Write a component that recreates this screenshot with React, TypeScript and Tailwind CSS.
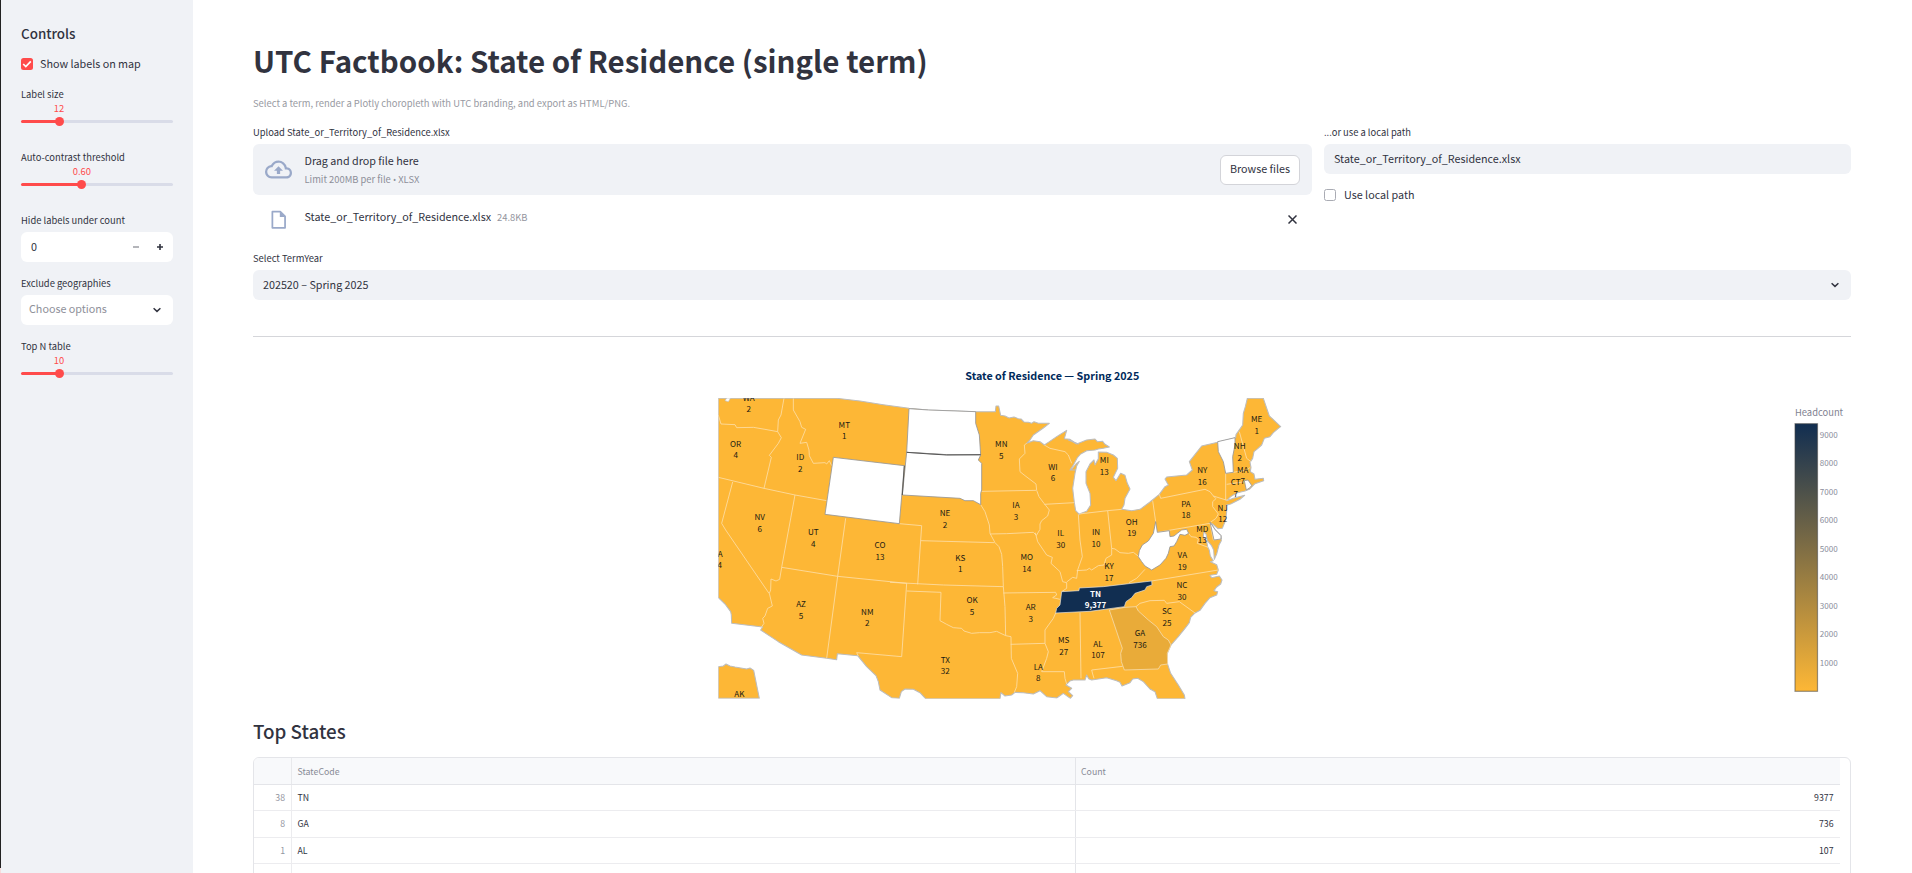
import React from "react";

type Pt = [number, number];

/* Map geometry is stored in a x3 grid, one frame per tile offset. */
const NAVY = "#112e51";
const GOLD = "#fdb736";

const shift = (dx: number, dy: number, pts: string) =>
  pts
    .trim()
    .split(/\s+/)
    .map((p) => {
      const [x, y] = p.split(",").map(Number);
      return `${x + dx},${y + dy}`;
    })
    .join(" ");

const A = (p: string) => shift(0, 0, p);
const B = (p: string) => shift(540, 0, p);
const C = (p: string) => shift(1080, 90, p);
const D = (p: string) => shift(0, 510, p);
const E = (p: string) => shift(540, 510, p);
const F = (p: string) => shift(1080, 510, p);

const outline = [
  A("25,115 380,115 450,123 520,134 597,145"),
  B("115,150 257,155 316,155 318,138 326,138 332,166 345,168 357,174 372,171 385,176 393,177 402,186 415,187 425,190 432,185 445,190 478,190 460,204 430,225 420,240 410,250 430,242 450,245 463,255 475,247 500,230 530,211 523,236 540,238 552,246 565,252"),
  C("-5,150 0,148 8,155 20,162 50,150 75,147 82,155 98,154 104,162 118,171 100,175 85,177 75,180 50,182 32,192 22,203 10,225 0,240"),
  B("555,330 543,330 558,312 568,304 560,318 555,340 548,385 553,428 557,452 568,463"),
  C("28,372 50,364 62,345 60,310 48,280 48,245 60,222 72,210 75,225 85,206 85,186 110,187 130,195 142,205 143,235 130,262 138,272 152,250 165,256 172,280 180,297 165,325 162,345 155,358 185,362 210,358 240,336 268,313 285,290 295,285 285,267 290,261 350,255 367,240 358,215 395,168 443,157 497,143 498,134 518,105 520,70 526,50 532,25 580,25 598,78 606,85 632,110 624,116 610,128 600,140 583,145 575,165 563,176 552,185 548,205 540,217 543,232 541,245 552,252 555,268 580,265 581,272 555,281 538,298 525,303 500,309 482,320 470,332 490,325 524,316 510,328 482,342 468,346 470,365 467,390 457,415 444,416 425,400 428,408 436,420 453,437 454,452 447,465 440,492 433,508 431,480 424,466 412,452 408,432 402,425 400,440 410,455 413,470 418,481 421,498 430,512 421,515 440,524 445,540"),
  F("440,133 420,136 425,143 448,138 456,150 452,162 440,171 432,182 443,185 440,195 420,203 405,220 390,241 375,249 362,262 358,278 345,295 325,320 303,345 292,370 292,400 302,430 325,465 343,495 345,506 262,506 255,485 240,477 220,455 203,445 188,447 180,458 156,468 150,457 140,452 110,443 65,450 56,446 50,435 45,450 10,450"),
  E("540,453 528,465 545,475 535,485 548,497 541,505 520,490 500,504 470,500 450,482 430,492 400,488 375,487 365,495 345,498 333,488 330,506 107,506 90,488 70,478 45,477 34,485"),
  D("568,505 545,503 510,480 505,455 498,437 470,410 443,377 382,371 380,389 350,385 275,375 205,335 152,300 158,291 65,280 64,255 62,245 45,222 25,203"),
].join(" ");

const alaska = D("25,410 40,408 48,402 60,408 75,411 110,417 120,414 131,421 148,505 25,505");

const noData = [
  A("370,292 583,317 568,491 345,463"),
  B("57,146 115,150 257,155 257,190 268,225 272,285 170,284 50,277"),
  B("50,277 170,284 272,285 265,300 275,310 275,390 272,400 272,434 250,422 225,422 210,415 37,405"),
  C("443,155 495,143 495,165 488,200 490,247 467,250 460,215 445,185"),
  C("257,395 262,427 298,422 300,440 312,438 322,430 335,420 350,418 356,430 345,436 330,433 320,455 312,468 300,470 295,490 288,505 270,525 245,540 225,528 215,515 205,500 208,482 217,465 235,453 250,430"),
  C("420,396 428,408 436,420 453,437 453,447 432,450"),
  C("523,272 534,270 545,286 540,293 529,300"),
];

const tennessee = E("515,185 567,182 568,174 640,170 785,153 786,165 770,170 765,180 735,190 725,203 708,215 703,230 600,244 497,249 500,235 510,225");
const georgia = F("118,240 165,232 198,230 205,243 235,270 260,290 280,320 295,330 303,345 292,370 293,402 272,405 265,417 163,420 154,395 152,370 157,355");

const borders = [
  A("222,115 213,165 205,180 203,215"),
  A("25,165 33,192 75,194 80,203 130,202 165,208 203,215"),
  A("203,215 214,233 205,250 178,286 184,292 162,385"),
  A("250,115 250,150 270,185 275,202 287,208 270,250 290,247 297,270 298,287 310,310 345,308 350,312 358,302 365,317"),
  A("25,352 162,385 255,405 350,422"),
  A("68,366 35,490 47,510 177,700"),
  A("255,405 215,622"),
  D("215,112 209,148 198,153 183,147 182,180 178,190 187,228 173,235 165,258 158,265 162,280 153,293"),
  D("215,112 383,139 590,160"),
  A("407,475 383,649 350,895"),
  A("568,491 635,497 623,673"),
  D("590,160 575,380 440,368 445,378"),
  E("0,157 160,165 340,170"),
  E("50,183 153,187 150,272 170,283 190,293 215,295 222,303 245,310 268,308 300,308 320,304 347,317 363,320 364,385 383,430 380,470 373,487"),
  E("92,32 313,38"),
  B("272,434 285,455 298,495 300,520 315,548 327,560 335,583 338,620 340,680 345,740 347,827"),
  B("275,394 438,391"),
  B("300,522 350,521 430,517 440,527"),
  B("410,250 403,255 405,280 388,297 390,335 405,347 438,372 440,391 447,410 462,430 478,450 473,468 455,482 450,492 450,508 440,525"),
  B("463,433 553,428"),
  B("463,255 480,265 525,275 535,285 545,310"),
  E("436,8 443,35 470,75 487,82 483,100 510,125 518,155 530,158 530,175 515,185"),
  B("565,463 570,540 577,590 563,630 560,655 548,652 530,666"),
  F("20,122 50,120 58,115 65,120 85,107 102,105 108,85 125,75 125,55 135,57 150,68 175,70 190,67 207,80"),
  C("28,372 113,362 155,358"),
  C("113,362 125,475"),
  C("248,332 257,395"),
  C("268,313 272,325 405,298 420,305 430,318 468,330"),
  C("430,318 438,326 428,335 428,350 445,372 438,385 420,398"),
  C("262,427 420,400"),
  C("420,400 430,450 453,447"),
  C("356,430 363,440 378,442 385,448 382,460 415,472"),
  C("467,250 467,330 475,330"),
  C("467,250 490,247 530,240 541,232"),
  C("508,125 530,205 543,215"),
  C("470,283 525,275"),
  E("340,189 497,187 500,195 488,203 510,208"),
  E("362,343 465,340"),
  E("497,249 490,265 465,300 465,340 475,365 470,385 455,425 523,425 525,445 530,462"),
  F("30,248 33,445"),
  F("158,409 65,420 68,432 72,445"),
  F("198,230 210,220 240,212 283,211 290,220 328,215 375,249"),
  F("245,153 445,120"),
  F("177,158 200,145 225,118"),
];

/* code, count, x, code baseline, count baseline */
const labels: [string, string, number, number, number][] = [
  ["WA", "2", 116, 122, 156],
  ["OR", "4", 77, 262, 294],
  ["MT", "1", 403, 205, 237],
  ["ID", "2", 271, 301, 337],
  ["NV", "6", 149, 481, 516],
  ["UT", "4", 310, 525, 561],
  ["CO", "13", 510, 564, 600],
  ["AZ", "5", 273, 741, 777],
  ["NM", "2", 472, 765, 798],
  ["MN", "5", 874, 261, 297],
  ["WI", "6", 1029, 330, 363],
  ["IA", "3", 918, 444, 480],
  ["NE", "2", 705, 468, 504],
  ["KS", "1", 751, 603, 636],
  ["MO", "14", 950, 600, 636],
  ["IL", "30", 1052, 528, 564],
  ["OK", "5", 786, 729, 765],
  ["AR", "3", 962, 750, 786],
  ["TX", "32", 706, 909, 942],
  ["LA", "8", 985, 930, 963],
  ["MS", "27", 1061, 849, 885],
  ["MI", "13", 1183, 309, 345],
  ["NY", "16", 1477, 339, 375],
  ["ME", "1", 1640, 186, 222],
  ["NH", "2", 1589, 267, 303],
  ["MA", "7", 1598, 339, 372],
  ["CT", "7", 1577, 375, 411],
  ["PA", "18", 1428, 441, 474],
  ["NJ", "12", 1538, 453, 486],
  ["MD", "13", 1477, 516, 549],
  ["OH", "19", 1265, 495, 528],
  ["IN", "10", 1158, 525, 561],
  ["VA", "19", 1417, 594, 630],
  ["KY", "17", 1197, 627, 663],
  ["NC", "30", 1416, 684, 720],
  ["SC", "25", 1371, 762, 798],
  ["GA", "736", 1290, 828, 864],
  ["AL", "107", 1164, 861, 894],
];

const ticks: Pt[] = [
  [9000, 435], [8000, 463], [7000, 492], [6000, 520], [5000, 549],
  [4000, 577], [3000, 606], [2000, 634], [1000, 663],
];

function Choropleth() {
  return (
    <svg className="block h-[360px] w-[1598px]" viewBox="253 345 1598 360">
      <defs>
        <clipPath id="plot">
          <rect x="718.3" y="398" width="565" height="300.7" />
        </clipPath>
        <linearGradient id="scale" x1="0" y1="0" x2="0" y2="1">
          <stop offset="0" stopColor={NAVY} />
          <stop offset="1" stopColor={GOLD} />
        </linearGradient>
      </defs>
      <text x="1052.3" y="380" textAnchor="middle" fontSize="10.75" fontWeight="700" fill="#002a5b">
        State of Residence — Spring 2025
      </text>
      <g clipPath="url(#plot)">
        <g transform="translate(710 360) scale(0.33333)" strokeLinejoin="round">
          <polygon points={outline} fill={GOLD} stroke="#bdbdbd" strokeWidth="3.2" />
          <polygon points={alaska} fill={GOLD} stroke="#bdbdbd" strokeWidth="3.2" />
          <g fill="none" stroke="#fce0ac" strokeWidth="2.4">
            {borders.map((b) => (
              <polyline key={b} points={b} />
            ))}
          </g>
          <polygon points={georgia} fill="#e9ab39" stroke="#f5dcae" strokeWidth="2.4" />
          <g fill="#ffffff" stroke="#989898" strokeWidth="2.6">
            {noData.map((p) => (
              <polygon key={p} points={p} />
            ))}
          </g>
          <polyline points={B("50,277 120,282 170,285 272,284")} fill="none" stroke="#555" strokeWidth="3" />
          <polyline points={B("43,317 37,405")} fill="none" stroke="#555" strokeWidth="3" />
          <polygon points={tennessee} fill={NAVY} stroke="#e6e6e6" strokeWidth="2" />
          <polygon points={A("45,122 50,114 62,114 55,125")} fill="#fff" stroke="#bdbdbd" strokeWidth="2" />
        </g>
        <g fontSize="8.1" textAnchor="middle" fill="#1c1a12">
          {labels.map(([code, count, x, y1, y2]) => (
            <React.Fragment key={code}>
              <text x={710 + x / 3} y={Math.round(360 + y1 / 3)}>{code}</text>
              <text x={710 + x / 3} y={Math.round(360 + y2 / 3)}>{count}</text>
            </React.Fragment>
          ))}
          <text x="717.7" y="557">CA</text>
          <text x="717.5" y="568">34</text>
          <text x="739.3" y="697">AK</text>
          <text x="1172.3" y="705">FL</text>
          <g fill="#fff" fontWeight="700">
            <text x="1095.5" y="597">TN</text>
            <text x="1095.5" y="608">9,377</text>
          </g>
        </g>
      </g>
      <text x="1795" y="416" fontSize="9.4" fill="#7f8291">Headcount</text>
      <rect x="1795" y="423.7" width="22.5" height="267.6" fill="url(#scale)" stroke="#444" strokeOpacity="0.55" strokeWidth="1.2" />
      <g fontSize="8.1" fill="#8b8e9b">
        {ticks.map(([v, y]) => (
          <text key={v} x="1819.8" y={y + 3}>{v}</text>
        ))}
      </g>
    </svg>
  );
}

function Label({ children }: { children: React.ReactNode }) {
  return <div className="h-[14px] text-[9.4px] leading-[12px]">{children}</div>;
}

function Slider({ label, value, percent }: { label: string; value: string; percent: number }) {
  return (
    <div className="h-[63px]">
      <Label>{label}</Label>
      <div className="grid h-[14px]" style={{ gridTemplateColumns: `${percent * 2}% 1fr` }}>
        <span className="text-center text-[9.4px] leading-[12px] text-[#ff4b4b]">{value}</span>
      </div>
      <div className="flex h-[11px] items-center">
        <div className="h-[3px] rounded-l-full bg-[#ff4b4b]" style={{ width: `${percent}%` }} />
        <div className="z-10 -mx-[4.5px] size-[9px] shrink-0 rounded-full bg-[#ff4b4b]" />
        <div className="h-[3px] flex-1 rounded-r-full bg-[#d9dce8]" />
      </div>
    </div>
  );
}

function Chevron() {
  return (
    <svg viewBox="0 0 8 8" className="size-2 shrink-0" fill="none" stroke="#31333f" strokeWidth="1.5">
      <path d="M0.6 2.3 L4 5.4 L7.4 2.3" />
    </svg>
  );
}

function Sidebar() {
  return (
    <div className="flex h-full w-[193px] shrink-0">
      <div className="flex w-px flex-col">
        <div className="h-[868px] bg-[#222]" />
        <div className="flex-1 bg-[#f6dcdc]" />
      </div>
      <aside className="flex-1 bg-[#f0f2f6] pt-[24px] pr-[20px] pl-[20px]">
        <div className="h-5 text-[13.4px] leading-[19px] font-medium">Controls</div>
        <div className="mt-3 mb-4 flex h-4 items-center gap-[7px]">
          <div className="grid size-3 place-items-center rounded-[2.5px] bg-[#ff4b4b]">
            <svg viewBox="0 0 12 12" className="size-3" fill="none" stroke="#fff" strokeWidth="1.7">
              <path d="M2.2 6 L4.8 8.6 L9.8 3.4" />
            </svg>
          </div>
          <span className="text-[10.75px] leading-4">Show labels on map</span>
        </div>
        <Slider label="Label size" value="12" percent={25} />
        <Slider label="Auto-contrast threshold" value="0.60" percent={40} />
        <div className="h-[63px]">
          <Label>Hide labels under count</Label>
          <div className="mt-1 flex h-[30px] items-center rounded-md bg-white pr-[10px] pl-[10px]">
            <span className="flex-1 text-[10.75px] leading-4">0</span>
            <span className="mr-[18px] h-[1.6px] w-[6px] bg-[#b4b5ba]" />
            <svg viewBox="0 0 6 6" className="size-[6px]" stroke="#31333f" strokeWidth="1.6">
              <path d="M3 0V6M0 3H6" />
            </svg>
          </div>
        </div>
        <div className="h-[63px]">
          <Label>Exclude geographies</Label>
          <div className="mt-1 flex h-[30px] items-center justify-between rounded-md bg-white pr-3 pl-[8px]">
            <span className="mb-[2px] text-[10.75px] leading-4 text-[#8e9099]">Choose options</span>
            <Chevron />
          </div>
        </div>
        <Slider label="Top N table" value="10" percent={25} />
      </aside>
    </div>
  );
}

const rows = [
  [38, "TN", 9377],
  [8, "GA", 736],
  [1, "AL", 107],
  [4, "CA", 34],
];

function StateTable() {
  return (
    <div className="mt-[11px] h-[160px] overflow-hidden rounded-t-md border border-[#e4e5e9] pr-[10px] text-[8.75px]">
      <div className="flex h-[27px] border-b border-[#e4e5e9] bg-[#f8f9fb] leading-[28px] text-[#888b96]">
        <div className="w-[38px] border-r border-[#e8e9ec]" />
        <div className="w-[784px] border-r border-[#e4e5e9] pl-[5.5px]">StateCode</div>
        <div className="pl-[5px]">Count</div>
      </div>
      {rows.map(([idx, code, count]) => (
        <div key={code} className="flex h-[26.3px] border-b border-[#ececef] leading-[26.5px]">
          <div className="w-[38px] border-r border-[#ececef] pr-[6px] text-right text-[#93959f]">{idx}</div>
          <div className="w-[784px] border-r border-[#e4e5e9] pl-[5.5px]">{code}</div>
          <div className="flex-1 pr-[6.5px] text-right">{count}</div>
        </div>
      ))}
    </div>
  );
}

export default function App() {
  return (
    <div className="flex h-[873px] w-[1912px] overflow-hidden bg-white font-['Noto_Sans_CJK_SC','Noto_Sans_CJK_JP','Noto_Sans',sans-serif] text-[#31333f]">
      <Sidebar />
      <main className="w-[1719px] pt-[39px] pr-[61px] pl-[60px]">
        <h1 className="h-[44px] text-[29.5px] leading-[43px] font-bold">
          UTC Factbook: State of Residence (single term)
        </h1>
        <p className="mt-[12px] h-4 text-[9.42px] leading-4 text-[#989aa2]">
          Select a term, render a Plotly choropleth with UTC branding, and export as HTML/PNG.
        </p>
        <div className="mt-[15px] flex h-[126px] gap-3">
          <section className="w-[1059px]">
            <Label>Upload State_or_Territory_of_Residence.xlsx</Label>
            <div className="mt-1 flex h-[51px] items-center rounded-md bg-[#f0f2f6] pr-3 pl-3">
              <svg viewBox="0 0 24 24" className="size-[27px]" fill="#9aa9c9">
                <path d="M19.35 10.04A7.49 7.49 0 0 0 12 4C9.11 4 6.6 5.64 5.35 8.04A5.994 5.994 0 0 0 0 14c0 3.31 2.69 6 6 6h13c2.76 0 5-2.24 5-5 0-2.64-2.05-4.78-4.65-4.96zM19 18H6c-2.21 0-4-1.79-4-4 0-2.05 1.53-3.76 3.56-3.97l1.07-.11.5-.95A5.469 5.469 0 0 1 12 6c2.62 0 4.88 1.86 5.39 4.43l.3 1.5 1.53.11A2.98 2.98 0 0 1 22 15c0 1.65-1.35 3-3 3zM8 13h2.55v3h2.9v-3H16l-4-4z" />
              </svg>
              <div className="ml-[12.5px] flex-1">
                <div className="h-[18px] text-[10.75px] leading-[18px]">Drag and drop file here</div>
                <div className="h-[17px] text-[9.4px] leading-[19px] text-[#8d8f99]">
                  Limit 200MB per file <span className="font-['Open_Sans'] text-[8.5px]">•</span> XLSX
                </div>
              </div>
              <div className="h-[30px] w-[80px] rounded-md border border-[#d3d4d9] bg-white text-center text-[10.75px] leading-[26px]">
                Browse files
              </div>
            </div>
            <div className="flex h-[48px] items-center pr-[15px] pl-[14.5px]">
              <svg viewBox="0 0 24 24" className="mt-px size-[21px]" fill="none" stroke="#9aa9c9" strokeWidth="2">
                <path d="M5 3h9l5.5 5.5V21.5H5z" strokeLinejoin="round" />
                <path d="M13.5 3V9H19.5z" fill="#9aa9c9" stroke="none" />
              </svg>
              <span className="mb-[4px] ml-[16px] text-[10.75px] leading-4">State_or_Territory_of_Residence.xlsx</span>
              <span className="mb-[4px] ml-[6px] flex-1 text-[9.4px] leading-4 text-[#93959e]">24.8KB</span>
              <svg viewBox="0 0 9 9" className="size-[9px]" stroke="#31333f" strokeWidth="1.5">
                <path d="M.5 .5L8.5 8.5M8.5 .5L.5 8.5" />
              </svg>
            </div>
          </section>
          <section className="w-[527px]">
            <Label>...or use a local path</Label>
            <div className="mt-1 h-[30px] rounded-md bg-[#f0f2f6] pl-[10px] text-[10.75px] leading-[29px]">
              State_or_Territory_of_Residence.xlsx
            </div>
            <div className="mt-[13px] flex h-4 items-center gap-[8px]">
              <div className="size-3 rounded-[2.5px] border border-[#a9abb3] bg-white" />
              <span className="text-[10.75px] leading-4">Use local path</span>
            </div>
          </section>
        </div>
        <Label>Select TermYear</Label>
        <div className="mt-1 flex h-[30px] items-center justify-between rounded-md bg-[#f0f2f6] pr-3 pl-[10px]">
          <span className="text-[10.75px] leading-4">202520 – Spring 2025</span>
          <Chevron />
        </div>
        <div className="mt-[36px] mb-[8px] h-px bg-[#d5d6da]" />
        <Choropleth />
        <h3 className="mt-[13px] h-7 text-[18.8px] leading-[26px] font-medium">Top States</h3>
        <StateTable />
      </main>
    </div>
  );
}
